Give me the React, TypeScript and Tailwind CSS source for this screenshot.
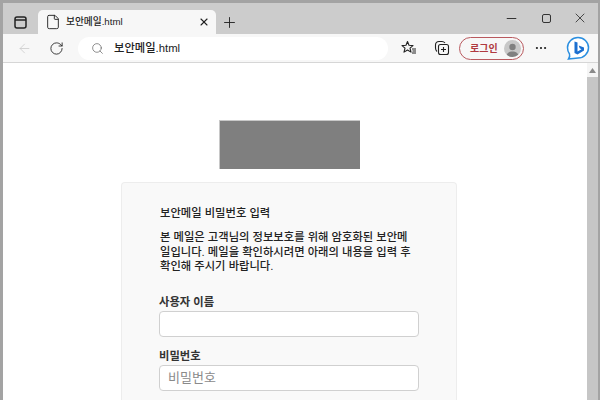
import { ArrowLeft, RotateCw, Search, X, Plus, Minus, MoreHorizontal, File } from "lucide-react";

const font = { fontFamily: '"Liberation Sans", "Noto Sans CJK KR", sans-serif' };

function StarList() {
  return (
    <svg width="16" height="16" viewBox="0 0 16 16" fill="none" stroke="#222" strokeWidth="1.1" strokeLinejoin="round">
      <path d="M6.500 1.500 8 5.300l4 .3-3 2.600 1 3.900-3.500-2.100L3 12.100l1-3.900-3-2.600 4-.3z" />
      <path d="M11 9h4M11.500 11h3.500M11 13h4" />
    </svg>
  );
}

function Collections() {
  return (
    <svg width="16" height="16" viewBox="0 0 16 16" fill="none" stroke="#222" strokeWidth="1.1">
      <rect x="4.500" y="4.500" width="10" height="10" rx="2" />
      <path d="M9.500 7v5M7 9.500h5" />
      <path d="M3 11.500C1.800 10.500 1.500 9.500 1.500 8V5c0-2 1.500-3.500 3.500-3.500h3c1.300 0 2.200.5 3 1.500" />
    </svg>
  );
}

function BingLogo() {
  return (
    <svg width="24" height="24" viewBox="0 0 24 24" fill="none">
      <path d="M12 1.500c5.800 0 10.500 4.500 10.500 10.200S17.800 22 12 22c-2.500 0-6 .8-9.500 1 1-1.500 1.500-3.500 1-5C2.300 16.300 1.500 14 1.500 11.700 1.500 6 6.200 1.500 12 1.500z" fill="#fff" stroke="#2b8fe0" strokeWidth="1.500" />
      <path d="M8.500 5.500l3 1v9l4-2.300-1.800-1-1-2.600 5.300 2v3l-6.500 3.900-3-1.600z" fill="#1b6fd0" />
    </svg>
  );
}

export default function App() {
  return (
    <div className="flex h-[400px] w-[600px] flex-col overflow-hidden border-t-[3px] border-l-[3px] border-r-2 border-[#a3a3a3] bg-white" style={font}>
      {/* tab strip */}
      <div className="flex h-[31px] shrink-0 items-end bg-[#cccccc]">
        <div className="flex h-[24px] w-[35px] items-center justify-center">
          <svg width="13" height="13" viewBox="0 0 13 13" fill="none" stroke="#222" strokeWidth="1.500">
            <rect x="1" y="1" width="11" height="11" rx="2" />
            <path d="M1 4h11" />
          </svg>
        </div>
        <div className="flex h-[24px] w-[178px] items-center rounded-t-[5px] bg-[#f7f7f7] pl-[7px] pr-[6px]">
          <File size={16} strokeWidth={1.400} color="#222" />
          <span className="ml-[5px] flex-1 text-[9.700px] font-medium text-[#222]">보안메일.html</span>
          <X size={12} strokeWidth={2.200} color="#222" />
        </div>
        <div className="flex h-[24px] w-[27px] items-center justify-center">
          <Plus size={17} strokeWidth={1.300} color="#222" />
        </div>
        <div className="ml-auto flex h-full items-center pb-[1px] pr-[10px]">
          <Minus size={15} strokeWidth={1.700} color="#333" />
          <div className="ml-[23px] h-[9px] w-[9px] rounded-[2px] border-[1.500px] border-[#333]" />
          <X size={16} strokeWidth={1.300} color="#333" className="ml-[21px]" />
        </div>
      </div>
      {/* toolbar */}
      <div className="flex h-[29px] shrink-0 items-center border-b border-[#d6d6d6] bg-[#f7f7f7] pl-[14px]">
        <ArrowLeft size={15} strokeWidth={1.200} color="#c8c8c8" />
        <RotateCw size={15} strokeWidth={1.400} color="#222" className="ml-[17px]" />
        <div className="ml-[14px] flex h-[23px] w-[310px] items-center rounded-full bg-white pl-[13px]">
          <Search size={13} strokeWidth={1.200} color="#555" />
          <span className="ml-[10px] text-[11.300px] font-medium text-[#222]">보안메일.html</span>
        </div>
        <div className="ml-[13px]"><StarList /></div>
        <div className="ml-[17px]"><Collections /></div>
        <div className="ml-[9px] flex h-[23px] w-[65px] items-center justify-between rounded-full border border-[#b9595e] pl-[10px] pr-[2px]">
          <span className="text-[10px] font-bold text-[#b03a40]">로그인</span>
          <span className="flex h-[17px] w-[17px] items-end justify-center overflow-hidden rounded-full bg-[#c8c8c8]">
            <svg width="15" height="15" viewBox="0 0 15 15" fill="#808080">
              <circle cx="7.500" cy="5" r="3.200" />
              <path d="M1.500 15c0-4 2.500-5.500 6-5.500s6 1.500 6 5.500z" />
            </svg>
          </span>
        </div>
        <MoreHorizontal size={14} strokeWidth={1.800} color="#222" className="ml-[10px]" />
        <div className="ml-[18px]"><BingLogo /></div>
      </div>
      {/* page */}
      <div className="flex min-h-0 flex-1">
        <div className="flex-1 overflow-hidden">
          <div className="ml-[216px] mt-[57px] h-[49px] w-[141px] border-l border-t border-[#c8c8c8] bg-[#7f7f7f]" />
          <div className="ml-[118px] mt-[13px] h-[300px] w-[336px] rounded-t-[4px] border border-b-0 border-[#ededed] bg-[#f9f9f9] pl-[37px] pt-[23px]">
            <p className="ml-[1px] text-[11.300px] font-medium leading-[14px] text-[#222]">보안메일 비밀번호 입력</p>
            <p className="ml-[1px] mt-[10px] text-[11.300px] font-medium leading-[14.500px] text-[#222]">
              본 메일은 고객님의 정보보호를 위해 암호화된 보안메
              <br />
              일입니다. 메일을 확인하시려면 아래의 내용을 입력 후
              <br />
              확인해 주시기 바랍니다.
            </p>
            <label className="mt-[21px] block text-[11.300px] font-semibold leading-[14px] text-[#333]">사용자 이름</label>
            <div className="mt-[2px] h-[26px] w-[260px] rounded-[4px] border border-[#d0d0d0] bg-white" />
            <label className="mt-[12px] block text-[11.300px] font-semibold leading-[14px] text-[#333]">비밀번호</label>
            <div className="mt-[2px] flex h-[26px] w-[260px] items-center rounded-[4px] border border-[#d0d0d0] bg-white pl-[8px] text-[13px] text-[#8a8a8a]">비밀번호</div>
          </div>
        </div>
        {/* scrollbar */}
        <div className="flex w-[11px] shrink-0 flex-col items-center bg-[#f5f5f5]">
          <svg width="7" height="5" viewBox="0 0 7 5" fill="#8a8a8a" className="mt-[5px]"><path d="M3.500 0 7 5H0z" /></svg>
          <div className="mt-[4px] w-full flex-1 bg-[#c6c6c6]" />
        </div>
      </div>
    </div>
  );
}
